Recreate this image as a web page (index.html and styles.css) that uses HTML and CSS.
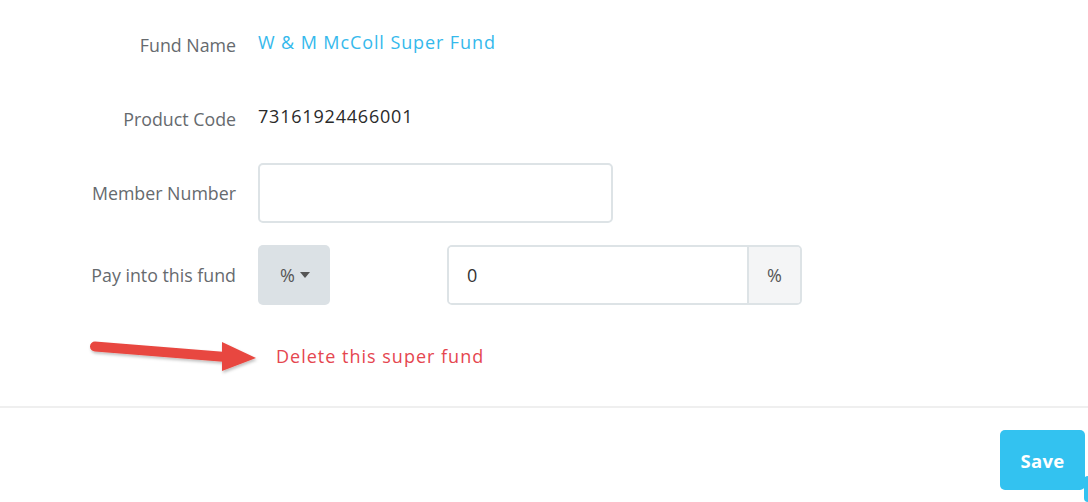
FILE: index.html
```html
<!DOCTYPE html>
<html>
<head>
<meta charset="utf-8">
<link rel="stylesheet" href="styles.css">
</head>
<body>
<div class="page">
  <form class="form">
    <div class="row">
      <label class="label">Fund Name</label>
      <a class="fund-link">W &amp; M McColl Super Fund</a>
    </div>
    <div class="row">
      <label class="label">Product Code</label>
      <span class="value">73161924466001</span>
    </div>
    <div class="row">
      <label class="label">Member Number</label>
      <input class="text-input" type="text" value="">
    </div>
    <div class="row row-pay">
      <label class="label">Pay into this fund</label>
      <div class="pay-controls">
        <button type="button" class="dropdown">%<span class="caret"></span></button>
        <div class="input-group">
          <input class="group-input" type="text" value="0">
          <span class="addon">%</span>
        </div>
      </div>
    </div>
    <div class="row row-delete">
      <span class="label"></span>
      <a class="delete-link">Delete this super fund</a>
    </div>
    <svg class="arrow" width="190" height="50" viewBox="0 0 190 50">
      <defs>
        <filter id="sh" x="-10%" y="-30%" width="120%" height="160%">
          <feDropShadow dx="1" dy="2" stdDeviation="1.5" flood-color="#000" flood-opacity="0.25"/>
        </filter>
      </defs>
      <g filter="url(#sh)" fill="#e8473f">
        <path d="M15 11.5 L146 22 L146 32 L15 21.5 A5 5 0 0 1 15 11.5 Z"/>
        <polygon points="142,12 176,28 142,41"/>
      </g>
    </svg>
  </form>
  <hr class="divider">
  <div class="footer">
    <button type="button" class="save">Save</button>
  </div>
</div>
</body>
</html>
```
FILE: styles.css
```css
* { box-sizing: border-box; }
html, body { margin: 0; padding: 0; background: #fff; }
body {
  font-family: "Open Sans", "Liberation Sans", sans-serif;
  font-size: 18px;
  color: #333;
  overflow: hidden;
}
.page { width: 1088px; height: 502px; }
.form {
  position: relative;
  padding-top: 15px;
  display: flex;
  flex-direction: column;
  gap: 15px;
}
.row {
  display: grid;
  grid-template-columns: 236px 1fr;
  column-gap: 22px;
  align-items: center;
  height: 59px;
}
.row-pay { margin-top: 8px; }
.row-delete { height: 24px; margin-top: 25px; }
.label {
  text-align: right;
  color: #666a6e;
  font-size: 17.8px;
}
.fund-link {
  color: #35b9ec;
  font-size: 18px;
  letter-spacing: 0.9px;
  position: relative;
  top: -3px;
}
.value {
  color: #2a2a2a;
  font-size: 18px;
  letter-spacing: 0.8px;
  position: relative;
  top: -3px;
}
.text-input {
  width: 355px;
  height: 60px;
  border: 2px solid #dde3e6;
  border-radius: 5px;
  font: inherit;
  padding: 0 18px;
  outline: none;
}
.pay-controls {
  display: flex;
  align-items: center;
  gap: 117px;
}
.dropdown {
  width: 72px;
  height: 60px;
  border: none;
  border-radius: 5px;
  background: #dbe1e5;
  color: #555;
  font: inherit;
  font-size: 18px;
  display: flex;
  align-items: center;
  justify-content: center;
  gap: 5px;
  padding: 0 0 0 2px;
}
.caret {
  width: 0;
  height: 0;
  border-left: 5px solid transparent;
  border-right: 5px solid transparent;
  border-top: 6px solid #555;
}
.input-group {
  display: flex;
  width: 355px;
  height: 60px;
  border: 2px solid #dde3e6;
  border-radius: 5px;
  overflow: hidden;
}
.group-input {
  flex: 1;
  min-width: 0;
  border: none;
  font: inherit;
  color: #333;
  padding: 0 18px;
  outline: none;
}
.addon {
  width: 53px;
  background: #f4f5f6;
  border-left: 2px solid #dde3e6;
  display: flex;
  align-items: center;
  justify-content: center;
  color: #555;
}
.delete-link {
  color: #e5464f;
  font-size: 18px;
  letter-spacing: 1px;
  margin-left: 18px;
}
.arrow {
  position: absolute;
  left: 80px;
  top: 330px;
  pointer-events: none;
}
.divider {
  margin: 38px 0 0;
  border: none;
  border-top: 2px solid #efefef;
}
.footer {
  display: flex;
  justify-content: flex-end;
  padding: 22px 3px 0 0;
}
.save {
  position: relative;
  width: 85px;
  height: 60px;
  border: none;
  border-radius: 5px;
  background: #33c2f0;
  color: #fff;
  font: inherit;
  font-weight: 700;
  font-size: 18.5px;
  letter-spacing: 0.3px;
}
.save::after {
  content: "";
  position: absolute;
  right: -4px;
  bottom: -12px;
  width: 5px;
  height: 26px;
  background: #33c2f0;
  border-radius: 4px 0 0 4px;
}
```
